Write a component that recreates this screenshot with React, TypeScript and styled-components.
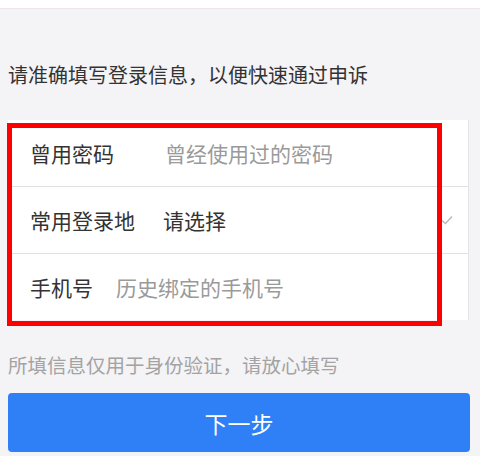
import React from "react";
import styled, { createGlobalStyle } from "styled-components";

const Global = createGlobalStyle`
  html, body { margin: 0; padding: 0; background: #f4f3f6; }
  body { font-family: "Noto Sans CJK SC", "Noto Sans", sans-serif; }
`;

const Page = styled.div`
  width: 480px;
  height: 456px;
  overflow: hidden;
  background: #f4f3f6;
`;

const TopBar = styled.div`
  height: 8px;
  background: #ffffff;
  border-bottom: 1px solid #ece6e8;
`;

const Title = styled.div`
  padding: 52px 0 0 8px;
  margin-bottom: 31px;
  font-size: 20px;
  line-height: 28px;
  color: #333;
`;

const CardWrap = styled.div`
  position: relative;
  margin-left: 8px;
  width: 461px;
`;

const Card = styled.div`
  background: #fff;
  border-right: 1px solid #e4e2e6;
  box-sizing: border-box;
`;

const Row = styled.div<{ $last?: boolean }>`
  height: 66px;
  display: flex;
  align-items: center;
  padding: 0 15px 0 22px;
  border-bottom: ${(p) => (p.$last ? "none" : "1px solid #e3e1e5")};
  font-size: 21px;
`;

const Label = styled.span<{ $w: number }>`
  width: ${(p) => p.$w}px;
  flex: none;
  color: #333;
`;

const Value = styled.span<{ $placeholder?: boolean }>`
  flex: 1;
  color: ${(p) => (p.$placeholder ? "#9a9a9a" : "#333")};
`;

const Check = styled.svg`
  flex: none;
  width: 12px;
  height: 10px;
`;

const Highlight = styled.div`
  position: absolute;
  left: -1px;
  top: 3px;
  width: 435px;
  height: 203px;
  box-sizing: border-box;
  border: 5px solid #ff0000;
  pointer-events: none;
`;

const Note = styled.div`
  margin: 32px 0 15px 8px;
  font-size: 19.5px;
  line-height: 26px;
  color: #a3a3a3;
`;

const Button = styled.button`
  display: flex;
  align-items: center;
  justify-content: center;
  margin-left: 8px;
  width: 462px;
  height: 59px;
  border: none;
  border-radius: 4px;
  background: #2f80f6;
  color: #fff;
  font-family: inherit;
  font-size: 23px;
  padding: 0;
`;

export default function App() {
  return (
    <Page>
      <Global />
      <TopBar />
      <Title>请准确填写登录信息，以便快速通过申诉</Title>
      <CardWrap>
        <Card>
          <Row>
            <Label $w={135}>曾用密码</Label>
            <Value $placeholder>曾经使用过的密码</Value>
          </Row>
          <Row>
            <Label $w={133}>常用登录地</Label>
            <Value>请选择</Value>
            <Check viewBox="0 0 12 10">
              <path d="M1 5.5 L4.5 8.5 L11 1.5" fill="none" stroke="#b9b9b9" strokeWidth="1.4" />
            </Check>
          </Row>
          <Row $last>
            <Label $w={86}>手机号</Label>
            <Value $placeholder>历史绑定的手机号</Value>
          </Row>
        </Card>
        <Highlight />
      </CardWrap>
      <Note>所填信息仅用于身份验证，请放心填写</Note>
      <Button>下一步</Button>
    </Page>
  );
}
